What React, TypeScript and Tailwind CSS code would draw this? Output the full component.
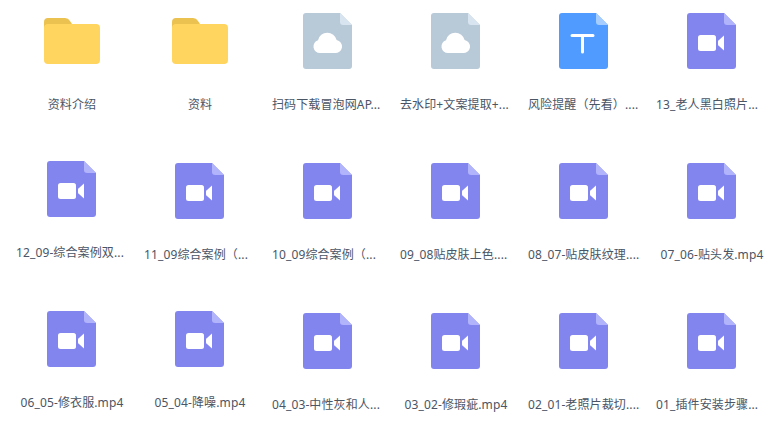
type Kind = "folder" | "cloud" | "text" | "video";

const files: { name: string; kind: Kind; raised?: boolean }[] = [
  { name: "资料介绍", kind: "folder" },
  { name: "资料", kind: "folder" },
  { name: "扫码下载冒泡网AP...", kind: "cloud" },
  { name: "去水印+文案提取+...", kind: "cloud" },
  { name: "风险提醒（先看）....", kind: "text" },
  { name: "13_老人黑白照片...", kind: "video" },
  { name: "12_09-综合案例双...", kind: "video", raised: true },
  { name: "11_09综合案例（...", kind: "video" },
  { name: "10_09综合案例（...", kind: "video" },
  { name: "09_08贴皮肤上色....", kind: "video" },
  { name: "08_07-贴皮肤纹理....", kind: "video" },
  { name: "07_06-贴头发.mp4", kind: "video" },
  { name: "06_05-修衣服.mp4", kind: "video", raised: true },
  { name: "05_04-降噪.mp4", kind: "video", raised: true },
  { name: "04_03-中性灰和人...", kind: "video" },
  { name: "03_02-修瑕疵.mp4", kind: "video" },
  { name: "02_01-老照片裁切....", kind: "video" },
  { name: "01_插件安装步骤...", kind: "video" },
];

function FolderIcon() {
  return (
    <svg width="56" height="46" viewBox="0 0 56 46" className="mt-[5px]">
      <path d="M0 4a4 4 0 0 1 4-4h17a6 6 0 0 1 5 3l2 3v6H0z" fill="#ebc14f" />
      <path d="M0 10a4 4 0 0 1 4-4h48a4 4 0 0 1 4 4v32a4 4 0 0 1-4 4H4a4 4 0 0 1-4-4z" fill="#ffd55f" />
    </svg>
  );
}

function FileIcon({ kind }: { kind: Kind }) {
  const body = kind === "cloud" ? "#b8c9d8" : kind === "text" ? "#4f9bff" : "#8385ef";
  const fold = kind === "cloud" ? "#d8e4ef" : kind === "text" ? "#a6cdff" : "#b1b3fb";
  return (
    <svg width="49" height="56" viewBox="0 0 49 56" className="-ml-px">
      <path d="M3 0h34l12 12v41a3 3 0 0 1-3 3H3a3 3 0 0 1-3-3V3a3 3 0 0 1 3-3z" fill={body} />
      <path d="M37 0l12 12h-9a3 3 0 0 1-3-3z" fill={fold} />
      {kind === "cloud" && (
        <path
          d="M17 40a6.5 6.5 0 0 1-2-12.7 9.5 9.5 0 0 1 18.6-.2A6.5 6.5 0 0 1 31.500 40z"
          fill="#fff"
        />
      )}
      {kind === "text" && (
        <path d="M13 21h21a1.500 1.500 0 0 1 0 3h-9v15a1.500 1.500 0 0 1-3 0V24h-9a1.500 1.500 0 0 1 0-3z" fill="#fff" />
      )}
      {kind === "video" && (
        <>
          <rect x="11" y="22" width="18" height="16" rx="2.500" fill="#fff" />
          <path d="M37 22.500v15l-5-4.500a2 2 0 0 1-1-1.500v-3a2 2 0 0 1 1-1.500z" fill="#fff" />
        </>
      )}
    </svg>
  );
}

export default function App() {
  return (
    <div className="h-[437px] w-[774px] overflow-hidden bg-white px-2 pt-[13px] font-['Noto_Sans','Noto_Sans_CJK_SC',sans-serif]">
      <div className="grid grid-cols-[repeat(6,128px)] auto-rows-[150px]">
        {files.map((file) => (
          <div key={file.name} className={`flex flex-col items-center ${file.raised ? "-mt-[2px]" : ""}`}>
            <div className="flex h-[56px] items-start">
              {file.kind === "folder" ? <FolderIcon /> : <FileIcon kind={file.kind} />}
            </div>
            {/* cut-off names start at the left edge of the label, whole names are centred */}
            <div
              className={`mt-[27px] w-[112px] whitespace-nowrap text-xs leading-[18px] tracking-[0.12px] text-[#4a5565] ${
                file.name.endsWith("...") ? "text-left" : "text-center"
              }`}
            >
              {file.name}
            </div>
          </div>
        ))}
      </div>
    </div>
  );
}
